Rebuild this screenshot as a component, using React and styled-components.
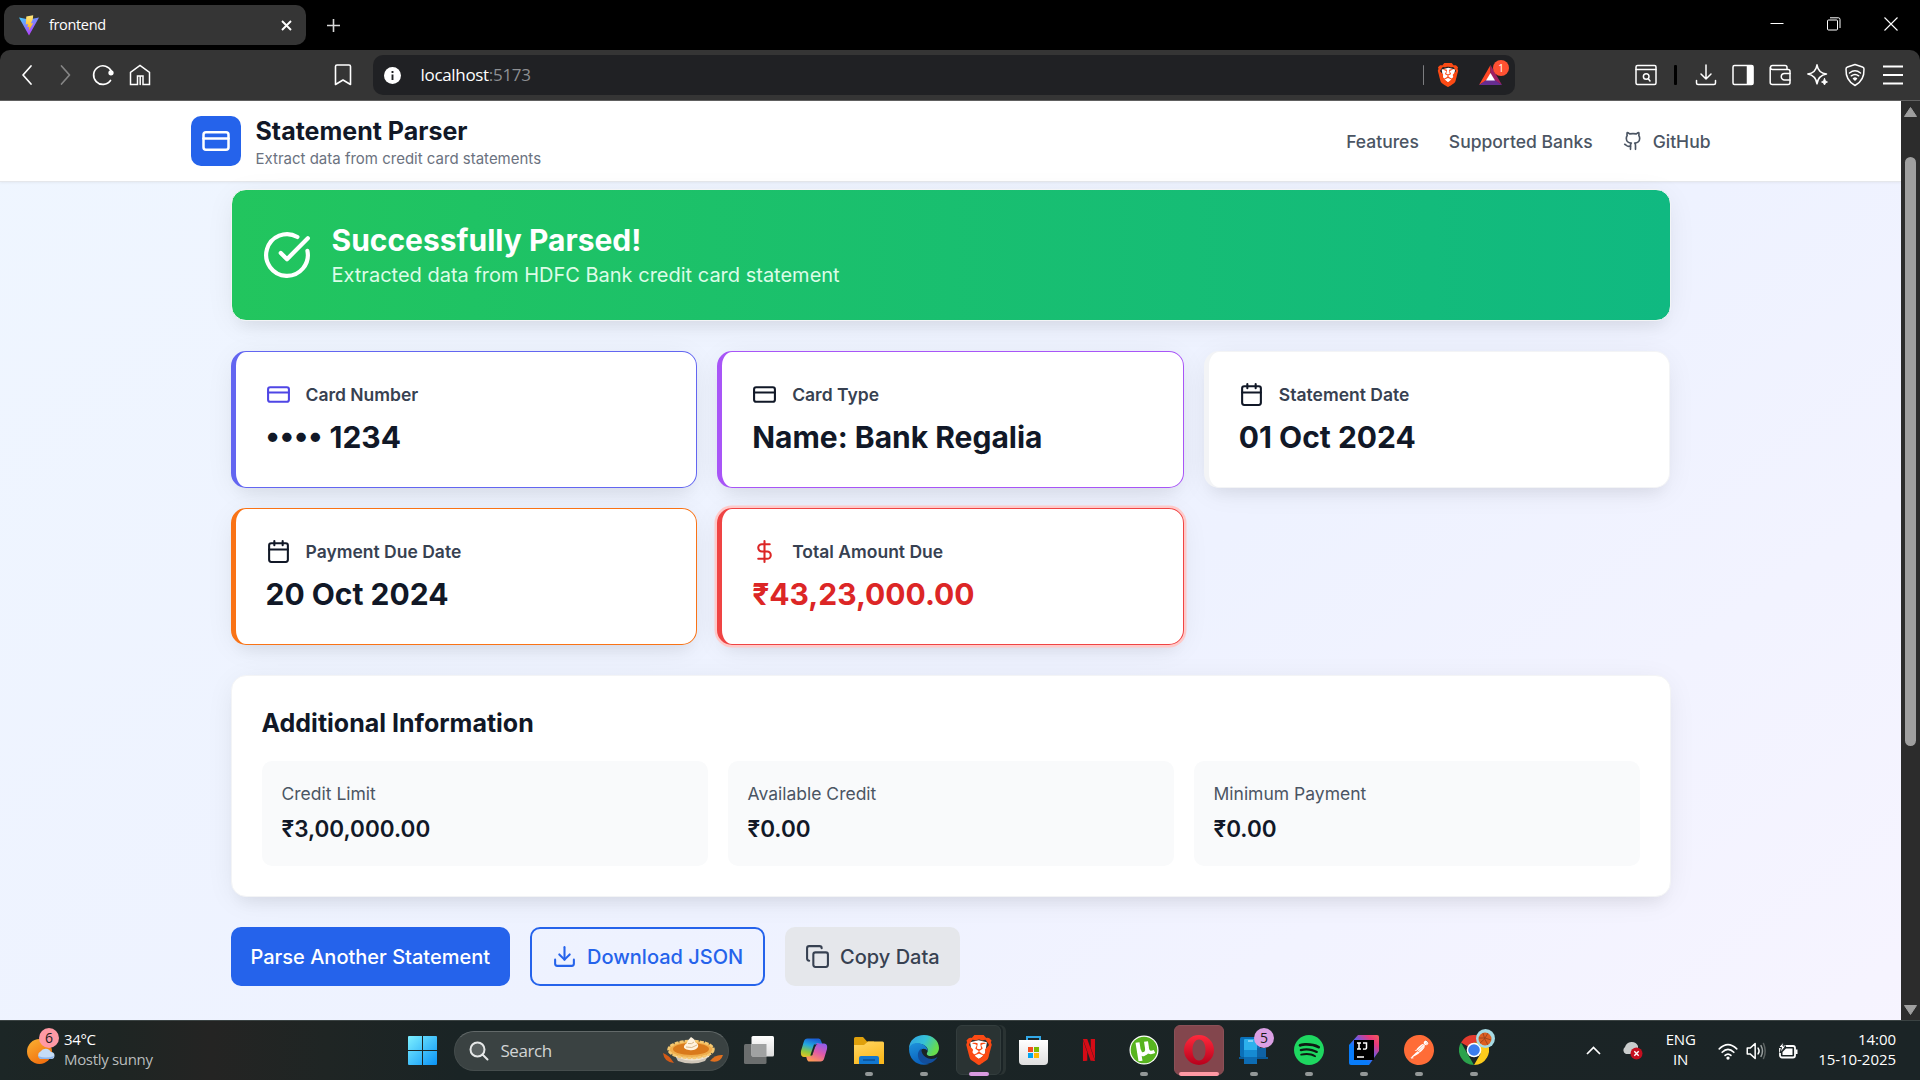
import React from "react";
import styled, { createGlobalStyle, css } from "styled-components";
import { CreditCard, Calendar, DollarSign, CircleCheckBig, Download, Copy, Github } from "lucide-react";
import { SiBrave, SiNetflix, SiSpotify, SiPostman } from "react-icons/si";

const Global = createGlobalStyle`
  *, *::before, *::after { box-sizing: border-box; }
  html, body { margin: 0; padding: 0; overflow: hidden; background: #000; }
  svg { display: block; flex: none; }
  h1, h2, h3, p { margin: 0; }
  button { font: inherit; border: 0; margin: 0; }
`;

const systemFont = css`
  font-family: "Open Sans", "Noto Sans", sans-serif;
`;

const Screen = styled.div`
  width: 1920px;
  height: 1080px;
  display: flex;
  flex-direction: column;
  overflow: hidden;
  background: #000;
`;

/* ---------- browser frame ---------- */
const TabStrip = styled.div`
  ${systemFont}
  height: 50px;
  flex: none;
  display: flex;
  align-items: center;
  padding: 0 1px 0 4px;
  color: #fff;
`;
const Tab = styled.div`
  width: 302px;
  height: 40px;
  border-radius: 10px;
  background: #353535;
  display: flex;
  align-items: center;
  gap: 10px;
  padding: 0 14px 0 15px;
`;
const TabTitle = styled.span`
  flex: 1;
  font-size: 14.5px;
  letter-spacing: -0.35px;
  line-height: 20px;
`;
const NewTab = styled.div`
  margin-left: 19.5px;
  flex: 1;
`;
const WindowButton = styled.div`
  width: 57px;
  height: 50px;
  display: flex;
  align-items: center;
  justify-content: center;
  padding-bottom: 2px;
`;

const Toolbar = styled.div`
  ${systemFont}
  height: 51px;
  flex: none;
  display: flex;
  align-items: center;
  padding: 0 8px;
  background: #353535;
  border-bottom: 1px solid #616161;
  border-radius: 10px 10px 0 0;
`;
const ToolSlot = styled.div`
  width: ${(p) => p.$w || 38}px;
  display: flex;
  justify-content: center;
`;
const Spacer = styled.div`
  width: ${(p) => p.$w}px;
  flex: none;
`;
const AddressBar = styled.div`
  width: 1142px;
  height: 40px;
  border-radius: 10px;
  background: #202124;
  display: flex;
  align-items: center;
  padding: 0 6px 0 11px;
`;
const Url = styled.span`
  flex: 1;
  margin-left: 19.5px;
  font-size: 17px;
  letter-spacing: -0.32px;
  line-height: 24px;
  color: #fff;
`;
const Port = styled.span`
  color: #8d8f92;
`;
const Divider = styled.div`
  width: ${(p) => p.$w}px;
  height: 20px;
  background: ${(p) => p.$color};
  border-radius: 1px;
`;
const Badged = styled.div`
  position: relative;
  display: flex;
`;
const Badge = styled.span`
  position: absolute;
  top: ${(p) => p.$top}px;
  left: ${(p) => p.$left}px;
  width: ${(p) => p.$size}px;
  height: ${(p) => p.$size}px;
  border-radius: 50%;
  background: ${(p) => p.$bg};
  color: ${(p) => p.$color};
  font-size: ${(p) => p.$font}px;
  display: flex;
  align-items: center;
  justify-content: center;
  line-height: 1;
`;

const Viewport = styled.div`
  flex: 1;
  min-height: 0;
  display: flex;
`;
const Scrollbar = styled.div`
  width: 19px;
  background: #2c2c2c;
  display: flex;
  flex-direction: column;
  align-items: center;
  justify-content: space-between;
  padding: 6px 0 5px;
`;
const Thumb = styled.div`
  width: 11px;
  height: 589px;
  margin: 40px 0 auto;
  border-radius: 6px;
  background: #9f9f9f;
`;

/* ---------- page ---------- */
const Page = styled.div`
  width: 1901px;
  font-family: Inter, "Liberation Sans", sans-serif;
  color: #111827;
  background: linear-gradient(to bottom right, #eff6ff, #eef2ff, #faf5ff) 0 -57px / 1901px 1378px no-repeat;
`;
const Header = styled.header`
  height: 81px;
  background: #fff;
  border-bottom: 1px solid #e5e7eb;
  box-shadow: 0 1.25px 2.5px rgba(0, 0, 0, 0.05);
`;
const HeaderInner = styled.div`
  width: 1600px;
  height: 80px;
  margin: 0 auto;
  padding: 0 40px;
  display: flex;
  align-items: center;
  justify-content: space-between;
`;
const Brand = styled.div`
  display: flex;
  align-items: center;
  gap: 15px;
`;
const Logo = styled.div`
  width: 50px;
  height: 50px;
  border-radius: 10px;
  background: #2563eb;
  color: #fff;
  display: flex;
  align-items: center;
  justify-content: center;
`;
const BrandName = styled.h1`
  font-size: 25px;
  font-weight: 700;
  line-height: 35px;
`;
const Tagline = styled.p`
  font-size: 15px;
  line-height: 20px;
  color: #6b7280;
`;
const Nav = styled.nav`
  display: flex;
  gap: 30px;
`;
const NavLink = styled.a`
  display: flex;
  align-items: center;
  gap: 10px;
  font-size: 17.5px;
  font-weight: 500;
  line-height: 25px;
  color: #4b5563;
`;

const Main = styled.main`
  width: 1440px;
  margin: 0 auto;
  padding-top: 7px;
  display: flex;
  flex-direction: column;
  gap: 30px;
`;
const shadow = "0 5px 31.25px -6.25px rgba(0,0,0,0.1), 0 12.5px 12.5px -6.25px rgba(0,0,0,0.04)";
const Card = styled.section`
  padding: 30px;
  background: #fff;
  border: 1px solid #f3f4f6;
  border-radius: 15px;
  box-shadow: ${shadow};
`;
const Banner = styled(Card)`
  background: linear-gradient(to right, #22c55e, #10b981);
  color: #fff;
  display: flex;
  align-items: center;
  gap: 20px;
`;
const BannerTitle = styled.h2`
  font-size: 30px;
  font-weight: 700;
  line-height: 40px;
`;
const BannerText = styled.p`
  font-size: 20px;
  line-height: 30px;
  color: #dcfce7;
`;
const Grid = styled.div`
  display: grid;
  grid-template-columns: repeat(3, 1fr);
  gap: 20px;
`;
const FieldCard = styled(Card)`
  border-color: ${(p) => p.$accent};
  border-left-width: 5px;
  box-shadow: ${(p) => (p.$ring ? `0 0 0 2.5px #fecaca, ${shadow}` : shadow)};
`;
const FieldHead = styled.div`
  display: flex;
  align-items: center;
  gap: 15px;
  margin-bottom: 10px;
  color: ${(p) => p.$color};
`;
const FieldLabel = styled.h3`
  font-size: 17.5px;
  font-weight: 600;
  line-height: 25px;
  color: #374151;
`;
const FieldValue = styled.p`
  font-size: 30px;
  font-weight: 700;
  line-height: 40px;
  color: ${(p) => p.$color || "#111827"};
`;
const SectionTitle = styled.h3`
  font-size: 25px;
  font-weight: 700;
  line-height: 35px;
  margin-bottom: 20px;
`;
const InfoBox = styled.div`
  padding: 20px;
  border-radius: 10px;
  background: #f9fafb;
`;
const InfoLabel = styled.p`
  font-size: 17.5px;
  line-height: 25px;
  margin-bottom: 5px;
  color: #4b5563;
`;
const InfoValue = styled.p`
  font-size: 22.5px;
  font-weight: 600;
  line-height: 35px;
`;
const Actions = styled.div`
  display: flex;
  gap: 20px;
`;
const Button = styled.button`
  && {
    height: 59px;
    padding: 0 20px;
    display: flex;
    align-items: center;
    gap: 10px;
    border-radius: 10px;
    font-size: 20px;
    font-weight: 500;
    line-height: 30px;
    white-space: nowrap;
    background: ${(p) => p.$bg || "transparent"};
    color: ${(p) => p.$color};
    border: ${(p) => (p.$outline ? "2px solid #2563eb" : "0")};
  }
`;

/* ---------- taskbar ---------- */
const Taskbar = styled.footer`
  ${systemFont}
  height: 60px;
  flex: none;
  display: flex;
  align-items: center;
  background: linear-gradient(90deg, #1c2626 0, #1e2523 6%, #242423 11%, #1f2524 17%, #1a2425 24%, #1b2426 100%);
  border-top: 1px solid #3b4343;
  color: #fff;
  font-size: 15px;
`;
const Weather = styled.div`
  width: 395px;
  padding-left: 26px;
  display: flex;
  align-items: center;
  gap: 8px;
`;
const Lines = styled.div`
  display: flex;
  flex-direction: column;
  line-height: 20px;
  margin-top: -4px;
  letter-spacing: ${(p) => p.$track || "-0.32px"};
  text-align: ${(p) => p.$align || "left"};
`;
const Muted = styled.span`
  color: #b9bdbd;
`;
const Slot = styled.div`
  position: relative;
  width: 55px;
  height: 50px;
  display: flex;
  align-items: center;
  justify-content: center;
  padding-bottom: 1px;
`;
const Tile = styled.div`
  position: relative;
  height: 50px;
  flex: none;
  border-radius: 6px;
  display: flex;
  align-items: center;
  justify-content: center;
  background: ${(p) => p.$bg || "transparent"};
  border: 1px solid ${(p) => p.$edge || "transparent"};
  box-shadow: ${(p) => (p.$stacked ? "2px 0 0 0 #1b2426, 5px 0 0 0 #2a3333" : "none")};
  width: ${(p) => (p.$stacked ? 45 : 50)}px;
`;
const Running = styled.span`
  position: absolute;
  bottom: 0;
  left: 50%;
  transform: translateX(-50%);
  width: ${(p) => p.$w || 8}px;
  height: 4px;
  border-radius: 2px;
  background: ${(p) => p.$color || "#939898"};
`;
const SearchBox = styled.div`
  width: 275px;
  height: 40px;
  margin: 0 2px 0 4px;
  border-radius: 20px;
  background: #3a4242;
  border: 1px solid #454d4d;
  border-top-color: #626969;
  display: flex;
  align-items: center;
  padding: 0 5px 0 14px;
`;
const SearchText = styled.span`
  flex: 1;
  margin-left: 11.5px;
  font-size: 17px;
  letter-spacing: -0.45px;
  line-height: 24px;
  color: #d2d5d5;
`;
const Tray = styled.div`
  margin-left: auto;
  padding-right: 24px;
  display: flex;
  align-items: center;
`;
const Layers = styled.div`
  display: grid;
  place-items: center;
  & > * { grid-area: 1 / 1; }
`;

/* ---------- icons ---------- */
const Line = ({ s = 24, w = 1.7, c = "#fff", children, ...rest }) => (
  <svg width={s} height={s} viewBox="0 0 24 24" fill="none" stroke={c} strokeWidth={w} strokeLinecap="round" strokeLinejoin="round" {...rest}>
    {children}
  </svg>
);

const ViteIcon = () => (
  <svg width="20" height="21" viewBox="0 0 20 21">
    <defs>
      <linearGradient id="vt" x1="0" y1="0" x2="0.6" y2="1"><stop stopColor="#41d1ff" /><stop offset="1" stopColor="#bd34fe" /></linearGradient>
      <linearGradient id="vb" x1="0" y1="0" x2="0" y2="1"><stop stopColor="#ffea83" /><stop offset="1" stopColor="#ffa800" /></linearGradient>
    </defs>
    <path d="M0 2.6L10 4.4L20 2.6L10 20.6Z" fill="url(#vt)" />
    <path d="M14.2.2L7.3 1.6L6.8 9.4L9 8.9L8.4 12.2L10.3 11.7L9.6 16L14.2 8L11.8 8.4L13.8 4.3Z" fill="url(#vb)" />
  </svg>
);

const BraveIcon = ({ s }) => (
  <Layers>
    <svg width={s * 0.7} height={s * 0.78} viewBox="0 0 20 22"><path d="M2 4L10 2L18 4L16 16L10 20L4 16Z" fill="#fff" /></svg>
    <SiBrave size={s} color="#fb4a14" />
  </Layers>
);

const BatIcon = () => (
  <svg width="23" height="20" viewBox="0 0 23 20">
    <path d="M11.5 0L0 20L11.5 13Z" fill="#ff4724" />
    <path d="M11.5 0L23 20L11.5 13Z" fill="#9e1f63" />
    <path d="M0 20H23L11.5 12Z" fill="#662d91" />
    <path d="M11.5 8L16 15.5H7Z" fill="#fff" />
  </svg>
);

const Sun = () => (
  <svg width="30" height="34" viewBox="0 0 30 34">
    <defs><linearGradient id="sun" x1="0" y1="0" x2="0.6" y2="1"><stop stopColor="#f9b233" /><stop offset="1" stopColor="#f2700f" /></linearGradient></defs>
    <circle cx="13.5" cy="17.5" r="12.5" fill="url(#sun)" />
    <path d="M15 25a4 4 0 0 1-.5-7.5A6 6 0 0 1 25 18a3.5 3.5 0 0 1 0 7Z" fill="#c5dcf6" />
    <path d="M12 22q8 3 16 0q-1 3-3 3H15q-2 0-3-3Z" fill="#8db5ec" />
  </svg>
);

const StartIcon = () => (
  <svg width="29" height="29" viewBox="0 0 29 29">
    <defs><linearGradient id="win" gradientUnits="userSpaceOnUse" x1="0" y1="0" x2="29" y2="29"><stop stopColor="#7df0ff" /><stop offset="1" stopColor="#0a93f6" /></linearGradient></defs>
    <path fill="url(#win)" d="M1 0H14V14H0V1Q0 0 1 0ZM15 0H28Q29 0 29 1V14H15ZM0 15H14V29H1Q0 29 0 28ZM15 15H29V28Q29 29 28 29H15Z" />
  </svg>
);

const Pie = () => (
  <svg width="60" height="28" viewBox="0 0 60 28">
    <path d="M0 16Q6 18 11 26Q1 25 0 16Z" fill="#d35a17" />
    <path d="M60 18Q52 17 47 24Q57 27 60 18Z" fill="#e0701f" />
    <path d="M9 13H49L42 24Q29 29 15 24Z" fill="#cfc6b8" />
    <path d="M11 17Q29 24 47 17L46 20Q29 27 13 20Z" fill="#efe8dc" />
    <ellipse cx="28" cy="12.5" rx="22.5" ry="8.5" fill="#efad4c" />
    <ellipse cx="28" cy="12.5" rx="22.5" ry="8.5" fill="none" stroke="#f5c871" strokeWidth="2.500" strokeDasharray="4 1" />
    <ellipse cx="28" cy="12" rx="18" ry="6" fill="#d97a1c" />
    <path d="M28 0Q33 3 32 5Q36 7 35 10Q32 14 26 13Q20 12 21 9Q22 7 24 6Q24 4 28 0Z" fill="#fff3df" />
    <path d="M23 10Q29 12 34 8M25 6.5Q29 7.5 31 5" stroke="#d8b78b" fill="none" />
  </svg>
);

const TaskView = () => (
  <svg width="30" height="28" viewBox="0 0 30 28">
    <defs><linearGradient id="tv" x1="0" y1="0" x2="0" y2="1"><stop stopColor="#fff" /><stop offset="1" stopColor="#dcdcdc" /></linearGradient></defs>
    <rect x="0" y="8" width="22.5" height="20" rx="1.5" fill="#6b6e6e" />
    <rect x="7.500" y="0" width="22.500" height="20.500" rx="1.500" fill="url(#tv)" />
    <path d="M7.500 8H22.500V20.500H9Q7.500 20.500 7.500 19Z" fill="#a0a2a2" />
  </svg>
);

const Copilot = () => (
  <svg width="28" height="26" viewBox="0 0 30 28">
    <defs>
      <linearGradient id="cp1" x1="0.5" y1="0" x2="0.2" y2="1"><stop stopColor="#1b5fd6" /><stop offset=".35" stopColor="#22a7e0" /><stop offset=".7" stopColor="#8fc73e" /><stop offset="1" stopColor="#f3c320" /></linearGradient>
      <linearGradient id="cp2" x1="0.8" y1="0" x2="0.3" y2="1"><stop stopColor="#8b5cf0" /><stop offset=".5" stopColor="#e05aa8" /><stop offset="1" stopColor="#ff9a55" /></linearGradient>
    </defs>
    <path d="M8 1.500H20Q22 1.500 23 5L24 8H19Q17 8 16 11L13 20Q12 23.500 8 21.500H4Q0 21 1 15L4 5Q5 1.500 8 1.500Z" fill="url(#cp1)" />
    <path d="M22 26.500H10Q8 26.500 7 22.500L6.500 21H11Q13 21 14 17L17 8Q18 5.500 21 7H26Q30 7.500 29 13L26 23Q25 26.500 22 26.500Z" fill="url(#cp2)" />
    <path d="M15 8H19Q17 8 16 11L13 20H11Z" fill="#1c2526" />
  </svg>
);

const Explorer = () => (
  <svg width="30" height="27" viewBox="0 0 30 27">
    <defs><linearGradient id="fo" x1="0" y1="0" x2="0.5" y2="1"><stop stopColor="#ffd766" /><stop offset="1" stopColor="#fbb91e" /></linearGradient></defs>
    <path d="M0 1.500Q0 0 1.500 0H9L13 4.500H20V12H0Z" fill="#dfa00c" />
    <path d="M0 8H10L14 4.500H28.500Q30 4.500 30 6V27H0Z" fill="url(#fo)" />
    <path d="M5 27V21Q5 19 7 19H23Q25 19 25 21V27Z" fill="#1277cf" />
    <path d="M9 23H21" stroke="#0b4e94" strokeWidth="1.500" />
  </svg>
);

const Edge = () => (
  <svg width="30" height="30" viewBox="0 0 30 30">
    <defs>
      <linearGradient id="ed1" x1="0" y1="0" x2="1" y2="0.4"><stop stopColor="#2f9fe6" /><stop offset=".55" stopColor="#35c1d6" /><stop offset="1" stopColor="#67dd4d" /></linearGradient>
      <linearGradient id="ed2" x1="0" y1="0" x2="0.3" y2="1"><stop stopColor="#1e93dc" /><stop offset="1" stopColor="#0b62bd" /></linearGradient>
    </defs>
    <path d="M0 14C0 5 7 0 15 0C24 0 30 6 30 13C30 18 26 21 22 21C18 21 17 19 18.500 17C20 14 17 10 12 9C6 8 1 11 0 14Z" fill="url(#ed1)" />
    <path d="M0 14C1 9 6 7 11 8.500C16 9.500 19 13 18.500 16C16 12 10 14 10.500 19C11 25 17 29 20 29C9 32 0 25 0 14Z" fill="url(#ed2)" />
    <path d="M12.500 13.500C8 16 7.500 23 12 27C17 31 25 28 28.500 22C25 24.500 20 24.500 16.500 22C13.500 20 12 17 12.500 13.500Z" fill="#124e9c" />
  </svg>
);

const Store = () => (
  <svg width="29" height="30" viewBox="0 0 29 30">
    <defs><linearGradient id="st" x1="0" y1="0" x2="0" y2="1"><stop stopColor="#fff" /><stop offset="1" stopColor="#dedede" /></linearGradient></defs>
    <path d="M8 7V2H21V7" fill="none" stroke="#32a9e8" strokeWidth="2" />
    <path d="M0 5H29V26Q29 30 25 30H4Q0 30 0 26Z" fill="url(#st)" />
    <path fill="#f25022" d="M9 12h5v5H9z" /><path fill="#7fba00" d="M15 12h5v5h-5z" />
    <path fill="#00a4ef" d="M9 18h5v5H9z" /><path fill="#ffb900" d="M15 18h5v5h-5z" />
  </svg>
);

const Torrent = () => (
  <svg width="30" height="30" viewBox="0 0 30 30">
    <circle cx="15" cy="15" r="14.500" fill="#fff" />
    <circle cx="15" cy="15" r="13.300" fill="#58b41f" />
    <g fill="none" stroke="#fff" strokeWidth="4" strokeLinejoin="round">
      <path d="M8.500 7.500L11.500 26" />
      <path d="M10 15Q11 20 15 19Q19 17.500 18 13L17 6.500" />
      <path d="M18 13Q19 19.500 25.500 16.500" strokeWidth="3.500" />
    </g>
  </svg>
);

const Opera = () => (
  <svg width="30" height="30" viewBox="0 0 30 30">
    <defs><linearGradient id="op" x1="0" y1="0" x2="0" y2="1"><stop stopColor="#ff2a3c" /><stop offset="1" stopColor="#b8001c" /></linearGradient></defs>
    <path fillRule="evenodd" d="M15 0A15 15 0 1 0 15 30A15 15 0 1 0 15 0ZM15 4.500C19 4.500 21.500 9 21.500 15C21.500 21 19 25.500 15 25.500C11 25.500 8.500 21 8.500 15C8.500 9 11 4.500 15 4.500Z" fill="url(#op)" />
  </svg>
);

const PhoneLink = () => (
  <svg width="30" height="28" viewBox="0 0 30 28">
    <rect x="1" y="1" width="20" height="20" rx="1.500" fill="#0a70b9" />
    <path d="M0 21H29V23H0Z" fill="#095a99" />
    <path d="M5 4Q5 3 6 3H17Q18 3 18 4V28H5Z" fill="#2cb1ed" />
    <path d="M5 14H18V21H5Z" fill="#168bd3" /><path d="M5 21H18V28H5Z" fill="#0d6cb3" />
    <path d="M18 12H27V21H18Z" fill="#0f62a4" />
    <path d="M9 5H14" stroke="#d7f3ff" strokeWidth="1" />
  </svg>
);

const Idea = () => (
  <svg width="30" height="30" viewBox="0 0 30 30">
    <defs><linearGradient id="ij" x1="0" y1="1" x2="1" y2="0"><stop offset=".35" stopColor="#087cfa" /><stop offset=".55" stopColor="#6a5be8" /><stop offset=".8" stopColor="#e8397a" /><stop offset="1" stopColor="#f55b5b" /></linearGradient></defs>
    <path d="M9 0H28Q30 0 30 2V16L20 30H2Q0 30 0 28V10Z" fill="url(#ij)" />
    <rect x="5" y="5" width="20" height="20" fill="#000" />
    <path d="M8 8H12M10 8V14M8 14H12M14 8H17.500V13Q17.500 14.500 14 14M8 22H15" stroke="#fff" strokeWidth="1.500" fill="none" />
  </svg>
);

const Chrome = () => (
  <svg width="30" height="30" viewBox="0 0 30 30">
    <path d="M15 15L2 7.500A15 15 0 0 1 28 7.500H15Z" fill="#e33b2e" />
    <path d="M2 7.500L8.500 18.800L15 30A15 15 0 0 1 2 7.500Z" fill="#2ba24c" />
    <path d="M28 7.500H15L21.500 18.800L15 30A15 15 0 0 0 28 7.500Z" fill="#fccb1c" />
    <circle cx="15" cy="15" r="7.300" fill="#fff" /><circle cx="15" cy="15" r="5.800" fill="#3b7ded" />
  </svg>
);

const Basketball = () => (
  <svg width="14" height="14" viewBox="0 0 14 14">
    <circle cx="7" cy="7" r="6.500" fill="#dd5f22" />
    <path d="M1 6Q7 5 13 8M5 1Q6 7 10 13M2 11Q7 8 10 1" stroke="#93401d" fill="none" strokeWidth=".8" />
  </svg>
);

const fields = [
  { label: "Card Number", value: "•••• 1234", icon: CreditCard, accent: "#6366f1", iconColor: "#4f46e5" },
  { label: "Card Type", value: "Name: Bank Regalia", icon: CreditCard, accent: "#a855f7" },
  { label: "Statement Date", value: "01 Oct 2024", icon: Calendar, accent: "#f3f4f6" },
  { label: "Payment Due Date", value: "20 Oct 2024", icon: Calendar, accent: "#f97316" },
  { label: "Total Amount Due", value: "₹43,23,000.00", icon: DollarSign, accent: "#ef4444", iconColor: "#dc2626", valueColor: "#dc2626", ring: true },
];
const extras = [
  ["Credit Limit", "₹3,00,000.00"],
  ["Available Credit", "₹0.00"],
  ["Minimum Payment", "₹0.00"],
];

const BrowserTabs = () => (
  <TabStrip>
    <Tab>
      <ViteIcon />
      <TabTitle>frontend</TabTitle>
      <svg width="11" height="11" viewBox="0 0 11 11"><path d="M1 1L10 10M10 1L1 10" stroke="#fff" strokeWidth="1.9" /></svg>
    </Tab>
    <NewTab>
      <svg width="15" height="15" viewBox="0 0 15 15"><path d="M7.500 1V14M1 7.500H14" stroke="#d8d8d8" strokeWidth="1.600" /></svg>
    </NewTab>
    <WindowButton><svg width="14" height="14" viewBox="0 0 14 14"><path d="M.5 6.500H13.500" stroke="#fff" /></svg></WindowButton>
    <WindowButton>
      <svg width="14" height="14" viewBox="0 0 14 14" fill="none" stroke="#fff"><rect x=".5" y="3" width="10" height="10" rx="1" /><path d="M3 .800H11.500Q13 .800 13 2.500V11" /></svg>
    </WindowButton>
    <WindowButton><svg width="14" height="14" viewBox="0 0 14 14"><path d="M.5.5L13.500 13.500M13.500.5L.5 13.500" stroke="#fff" strokeWidth="1.100" /></svg></WindowButton>
  </TabStrip>
);

const BrowserToolbar = () => (
  <Toolbar>
    <ToolSlot><Line><path d="M16 3L8 12L16 21" /></Line></ToolSlot>
    <ToolSlot><Line c="#858585"><path d="M8.500 3L16.500 12L8.500 21" /></Line></ToolSlot>
    <ToolSlot $w={37}>
      <Line><path d="M19.500 17.500A9.300 9.300 0 1 1 20.500 8.500" /><circle cx="20" cy="9.800" r="1.800" fill="#fff" /></Line>
    </ToolSlot>
    <ToolSlot>
      <Line w={1.5}><path d="M2.500 21.500V9.500L12 2.500L21.500 9.500V21.500H15V13H9.500V21.500ZM12.200 13V21.500" strokeLinejoin="miter" /></Line>
    </ToolSlot>
    <Spacer $w={165} />
    <ToolSlot><Line w={1.6}><path d="M4.500 3.500Q4.500 2 6 2H18Q19.500 2 19.500 3.500V21.500L12 17L4.500 21.500Z" /></Line></ToolSlot>
    <Spacer $w={11} />
    <AddressBar>
      <svg width="17" height="17" viewBox="0 0 17 17"><circle cx="8.500" cy="8.500" r="8.500" fill="#fff" /><path d="M8.500 7.500V13M8.500 4V6" stroke="#202124" strokeWidth="1.900" /></svg>
      <Url>localhost<Port>:5173</Port></Url>
      <Divider $w={1} $color="#7c7d80" />
      <Spacer $w={12} />
      <BraveIcon s={24} />
      <Spacer $w={19} />
      <Badged>
        <BatIcon />
        <Badge $top={-5} $left={14} $size={16} $bg="#ff5132" $color="#fff" $font={10}>1</Badge>
      </Badged>
      <Spacer $w={7} />
    </AddressBar>
    <Spacer $w={112} />
    <ToolSlot $w={37}>
      <Line w={1.5}><rect x="2" y="2.500" width="20" height="19" rx="1.500" /><path d="M2 6.500H22" /><circle cx="12.200" cy="13.500" r="2.800" /><path d="M14.500 16L16 18" /></Line>
    </ToolSlot>
    <Spacer $w={10} />
    <Divider $w={3} $color="#000" />
    <Spacer $w={10} />
    <ToolSlot $w={37.4}><Line w={1.5}><path d="M12 2V16M7 11L12 16L17 11M2.500 17.500V20Q2.500 21.500 4 21.500H20Q21.500 21.500 21.500 20V17.500" /></Line></ToolSlot>
    <ToolSlot $w={37.4}><Line w={1.5}><rect x="2" y="2.500" width="20" height="19" rx="1.500" /><path d="M16.500 3H21.500V21H16.500Z" fill="#fff" /></Line></ToolSlot>
    <ToolSlot $w={37.4}><Line w={1.5}><path d="M19 6.500V4.500Q19 2.500 17 2.500H4.500A2 2 0 0 0 4.500 6.500H20Q22 6.500 22 8.500V19.500Q22 21.500 20 21.500H4.500Q2.200 21.500 2.200 19.500V4.500" /><path d="M22 10.500H16.500A3 3 0 0 0 16.500 17H22" /></Line></ToolSlot>
    <ToolSlot $w={37.4}><Line w={1.5}><path d="M11 1.800Q12.200 10 20.500 11Q12.200 12.500 11 20.800Q9.800 12.500 1.800 11Q9.800 10 11 1.800Z" /><path d="M18.500 15.500Q19 18.500 21.500 19Q19 19.500 18.500 22Q18 19.500 15.500 19Q18 18.500 18.500 15.500Z" fill="#fff" strokeWidth=".8" /></Line></ToolSlot>
    <ToolSlot $w={37.4}><Line w={1.5}><path d="M12 1.500L19.500 4Q21 4.500 21 6Q21.500 17.500 12 22.500Q2.500 17.500 3 6Q3 4.500 4.500 4Z" /><path d="M6.500 10Q12 5.500 17.500 10M8.300 12.800Q12 10 15.700 12.800" /><path d="M10.500 15.500Q12 14.500 13.500 15.500L12 17Z" fill="#fff" /></Line></ToolSlot>
    <ToolSlot $w={37.4}><Line w={2}><path d="M2 3.500H22M2 12H22M2 20.500H22" strokeLinecap="butt" /></Line></ToolSlot>
  </Toolbar>
);

const SystemTaskbar = () => (
  <Taskbar>
    <Weather>
      <Badged>
        <Sun />
        <Badge $top={-6} $left={13} $size={20} $bg="#ff99a4" $color="#1c1c1c" $font={14}>6</Badge>
      </Badged>
      <Lines><span>34°C</span><Muted>Mostly sunny</Muted></Lines>
    </Weather>
    <Slot><StartIcon /></Slot>
    <SearchBox>
      <svg width="20" height="20" viewBox="0 0 20 20" fill="none" stroke="#e6e8e8" strokeWidth="2"><circle cx="8.500" cy="8.500" r="7" fill="#596060" /><path d="M13.500 13.500L18.500 18.500" strokeLinecap="round" /></svg>
      <SearchText>Search</SearchText>
      <Pie />
    </SearchBox>
    <Slot><TaskView /></Slot>
    <Slot><Copilot /></Slot>
    <Slot><Explorer /><Running /></Slot>
    <Slot><Edge /><Running /></Slot>
    <Slot><Tile $bg="#2a3333" $edge="#333d3d" $stacked><BraveIcon s={30} /></Tile><Running $w={20} $color="#d99be0" /></Slot>
    <Slot><Store /></Slot>
    <Slot><SiNetflix size={22} color="#d50b16" /></Slot>
    <Slot><Torrent /><Running /></Slot>
    <Slot><Tile $bg="#83464d" $edge="#8b5057"><Opera /></Tile><Running $w={40} $color="#ff99a4" /></Slot>
    <Slot>
      <Badged><PhoneLink /><Badge $top={-8} $left={15.5} $size={20} $bg="#dba0e4" $color="#1c1c1c" $font={14}>5</Badge></Badged>
      <Running />
    </Slot>
    <Slot>
      <Layers><svg width="26" height="26" viewBox="0 0 26 26"><circle cx="13" cy="13" r="12" fill="#0e1a13" /></svg><SiSpotify size={30} color="#1ed760" /></Layers>
      <Running />
    </Slot>
    <Slot><Idea /><Running /></Slot>
    <Slot>
      <Layers><svg width="26" height="26" viewBox="0 0 26 26"><circle cx="13" cy="13" r="12" fill="#fff" /></svg><SiPostman size={30} color="#ff6c37" /></Layers>
      <Running />
    </Slot>
    <Slot>
      <Badged><Chrome /><Badge $top={-6} $left={17} $size={19} $bg="#a6dbe4" $color="#000" $font={10}><Basketball /></Badge></Badged>
      <Running />
    </Slot>
    <Tray>
      <svg width="15" height="9" viewBox="0 0 15 9"><path d="M1 8L7.500 1.500L14 8" stroke="#fff" strokeWidth="1.700" fill="none" /></svg>
      <Spacer $w={21} />
      <svg width="21" height="19" viewBox="0 0 21 19"><path d="M4 13A4 4 0 0 1 3 6A7 7 0 0 1 16 5V13Z" fill="#c9cccc" /><circle cx="14.500" cy="12.500" r="6" fill="#c50f1f" /><path d="M12.300 10.300L16.700 14.700M16.700 10.300L12.300 14.700" stroke="#fff" strokeWidth="1.400" /></svg>
      <Spacer $w={23} />
      <Lines $align="center" $track="-0.2px"><span>ENG</span><span>IN</span></Lines>
      <Spacer $w={22.5} />
      <Line s={20} w={2}><path d="M1.500 9.500Q12-1 22.500 9.500M5 13.500Q12 6.500 19 13.500M8.500 17.300Q12 14 15.500 17.300" /><circle cx="12" cy="20.500" r="1" fill="#fff" /></Line>
      <Spacer $w={8} />
      <Line s={20} w={1.8}><path d="M1.500 8.500V15.500H5L11 21V3L5 8.500ZM14.500 8.500Q17 12 14.500 15.500" /><path d="M18 5.500Q21.500 12 18 18.500" stroke="#9aa0a0" /><path d="M21 3Q25 12 21 21" stroke="#5c6262" /></Line>
      <Spacer $w={12} />
      <svg width="20" height="18" viewBox="0 0 20 18"><rect x="2" y="4" width="15" height="11.500" rx="2" fill="none" stroke="#fff" strokeWidth="1.800" /><path d="M8 6.500H14.500V13H4.500V10Z" fill="#fff" /><path d="M18.500 7.500V12" stroke="#fff" strokeWidth="2" /><path d="M5.500 0L.5 5.500H3.500L2 11L8 4H5Z" fill="#fff" stroke="#1b2426" /></svg>
      <Spacer $w={20} />
      <Lines $align="right" $track="-0.04px"><span>14:00</span><span>15-10-2025</span></Lines>
    </Tray>
  </Taskbar>
);

export default function App() {
  return (
    <Screen>
      <Global />
      <BrowserTabs />
      <BrowserToolbar />
      <Viewport>
        <Page>
          <Header>
            <HeaderInner>
              <Brand>
                <Logo><CreditCard size={30} /></Logo>
                <div>
                  <BrandName>Statement Parser</BrandName>
                  <Tagline>Extract data from credit card statements</Tagline>
                </div>
              </Brand>
              <Nav>
                <NavLink>Features</NavLink>
                <NavLink>Supported Banks</NavLink>
                <NavLink><Github size={20} />GitHub</NavLink>
              </Nav>
            </HeaderInner>
          </Header>
          <Main>
            <Banner>
              <CircleCheckBig size={50} />
              <div>
                <BannerTitle>Successfully Parsed!</BannerTitle>
                <BannerText>Extracted data from HDFC Bank credit card statement</BannerText>
              </div>
            </Banner>
            <Grid>
              {fields.map(({ label, value, icon: Icon, accent, iconColor, valueColor, ring }) => (
                <FieldCard key={label} $accent={accent} $ring={ring}>
                  <FieldHead $color={iconColor || "#111827"}>
                    <Icon size={25} />
                    <FieldLabel>{label}</FieldLabel>
                  </FieldHead>
                  <FieldValue $color={valueColor}>{value}</FieldValue>
                </FieldCard>
              ))}
            </Grid>
            <Card>
              <SectionTitle>Additional Information</SectionTitle>
              <Grid>
                {extras.map(([label, value]) => (
                  <InfoBox key={label}>
                    <InfoLabel>{label}</InfoLabel>
                    <InfoValue>{value}</InfoValue>
                  </InfoBox>
                ))}
              </Grid>
            </Card>
            <Actions>
              <Button $bg="#2563eb" $color="#fff">Parse Another Statement</Button>
              <Button $outline $color="#2563eb"><Download size={25} />Download JSON</Button>
              <Button $bg="#e5e7eb" $color="#374151"><Copy size={25} />Copy Data</Button>
            </Actions>
          </Main>
        </Page>
        <Scrollbar>
          <svg width="13" height="10" viewBox="0 0 13 10"><path d="M6.500.5L12.500 9.500H.5Z" fill="#9f9f9f" stroke="#9f9f9f" strokeLinejoin="round" /></svg>
          <Thumb />
          <svg width="13" height="10" viewBox="0 0 13 10"><path d="M6.500 9.500L12.500.5H.5Z" fill="#9f9f9f" stroke="#9f9f9f" strokeLinejoin="round" /></svg>
        </Scrollbar>
      </Viewport>
      <SystemTaskbar />
    </Screen>
  );
}
